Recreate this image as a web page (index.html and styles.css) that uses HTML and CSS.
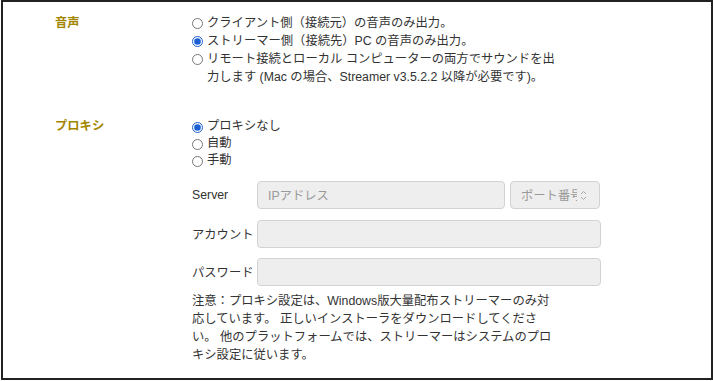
FILE: index.html
```html
<!DOCTYPE html>
<html lang="ja">
<head>
<meta charset="utf-8">
<title>設定</title>
<link rel="stylesheet" href="styles.css">
</head>
<body>
<div class="frame">
  <div class="section section-audio">
    <div class="sec-label">音声</div>
    <div class="sec-body">
      <div class="radios radios-wide">
        <label class="radio"><input type="radio" name="audio">クライアント側（接続元）の音声のみ出力。</label>
        <label class="radio"><input type="radio" name="audio" checked>ストリーマー側（接続先）PC の音声のみ出力。</label>
        <label class="radio"><input type="radio" name="audio">リモート接続とローカル コンピューターの両方でサウンドを出力します (Mac の場合、Streamer v3.5.2.2 以降が必要です)。</label>
      </div>
    </div>
  </div>
  <div class="section section-proxy">
    <div class="sec-label">プロキシ</div>
    <div class="sec-body">
      <div class="radios radios-tight">
        <label class="radio"><input type="radio" name="proxy" checked>プロキシなし</label>
        <label class="radio"><input type="radio" name="proxy">自動</label>
        <label class="radio"><input type="radio" name="proxy">手動</label>
      </div>
      <div class="fields">
        <div class="field-row">
          <span class="field-label">Server</span>
          <div class="input input-server"><span class="placeholder">IPアドレス</span></div>
          <div class="input input-port">
            <span class="port-text">ポート番号</span>
            <svg class="spin" width="7" height="11" viewBox="0 0 7 11"><path d="M1 4 L3.5 1.5 L6 4 M1 7 L3.5 9.5 L6 7" fill="none" stroke="#a8a8a8" stroke-width="1"/></svg>
          </div>
        </div>
        <div class="field-row">
          <span class="field-label">アカウント</span>
          <div class="input input-full"></div>
        </div>
        <div class="field-row">
          <span class="field-label">パスワード</span>
          <div class="input input-full"></div>
        </div>
      </div>
      <p class="note">注意：プロキシ設定は、Windows版大量配布ストリーマーのみ対応しています。 正しいインストーラをダウンロードしてください。 他のプラットフォームでは、ストリーマーはシステムのプロキシ設定に従います。</p>
    </div>
  </div>
</div>
</body>
</html>
```
FILE: styles.css
```css
html, body {
  margin: 0;
  padding: 0;
  background: #fff;
  overflow: hidden;
}
body {
  font-family: "Liberation Sans", "Noto Sans CJK JP", sans-serif;
  font-size: 12.3px;
  color: #333;
}
.frame {
  box-sizing: border-box;
  margin-left: 1px;
  width: 712px;
  height: 380px;
  border: 2px solid #222;
  box-shadow: 0 1px 0 #9a9a9a;
  padding: 12px 0 0 52px;
  display: flex;
  flex-direction: column;
}
.section {
  display: flex;
}
.section-proxy {
  margin-top: 32px;
}
.sec-label {
  width: 137px;
  flex: none;
  font-weight: bold;
  color: #a38600;
  line-height: 18px;
}
.section-proxy .sec-label {
  line-height: 17px;
}
.sec-body {
  display: flex;
  flex-direction: column;
}
.radios-wide {
  width: 369px;
}
.radio {
  display: block;
  position: relative;
  padding-left: 15px;
  line-height: 18px;
}
.radios-tight .radio {
  line-height: 17px;
}
.radio input {
  position: absolute;
  left: 0;
  top: 3.5px;
  margin: 0;
  width: 11px;
  height: 11px;
  accent-color: #1a5fd3;
}
.fields {
  margin-top: 12px;
  display: flex;
  flex-direction: column;
  gap: 10.5px;
}
.field-row {
  display: flex;
  align-items: center;
  gap: 5px;
}
.field-label {
  width: 60px;
  flex: none;
  white-space: nowrap;
}
.input {
  box-sizing: border-box;
  height: 28px;
  background: #eee;
  border: 1px solid #d2d2d2;
  border-radius: 4px;
  display: flex;
  align-items: center;
  padding-left: 10px;
  color: #999;
}
.input-server {
  width: 248px;
}
.input-port {
  width: 90px;
  overflow: hidden;
}
.port-text {
  width: 56px;
  overflow: hidden;
  white-space: nowrap;
  flex: none;
}
.spin {
  margin-left: 3px;
  flex: none;
}
.input-full {
  width: 344px;
}
.note {
  margin: 6px 0 0;
  width: 365px;
  line-height: 18px;
}
```
